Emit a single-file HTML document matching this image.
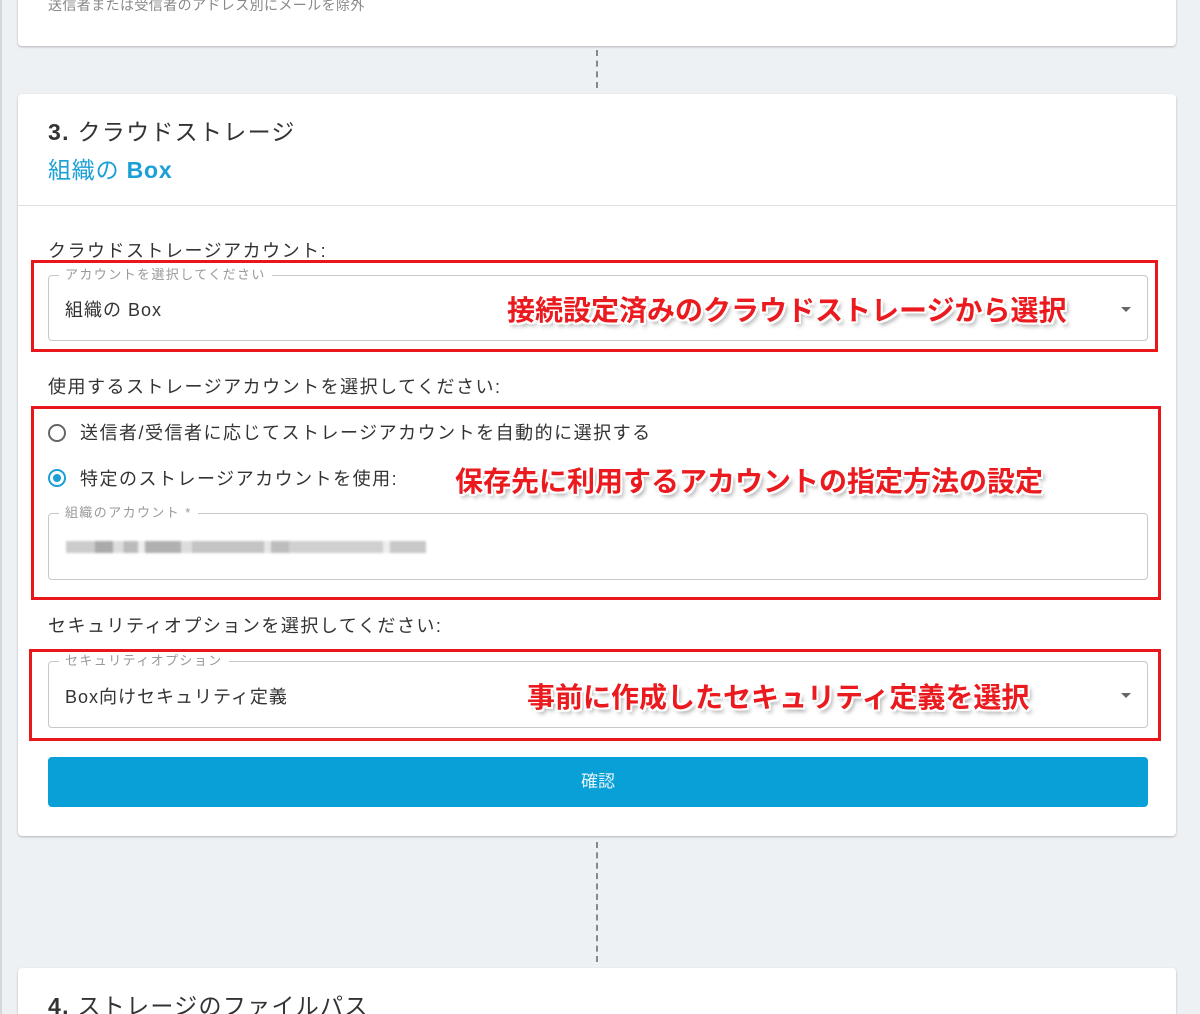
<!DOCTYPE html>
<html><head><meta charset="utf-8"><style>
*{margin:0;padding:0;box-sizing:border-box}
html,body{width:1200px;height:1014px;overflow:hidden}
body{background:#eef1f4;font-family:"Liberation Sans","Noto Sans CJK JP",sans-serif;position:relative;color:#333}
.a{position:absolute;white-space:nowrap}
.card{position:absolute;left:18px;width:1158px;background:#fff;border-radius:4px;box-shadow:0 1px 2px rgba(0,0,0,.25)}
.dash{position:absolute;left:596px;width:0;border-left:2px dashed #888}
.field{position:absolute;left:48px;width:1100px;border:1px solid #c8c8c8;border-radius:4px}
.leg{position:absolute;top:-9px;left:10px;background:#fff;padding:0 6px;font-size:13px;color:#999;line-height:16px;letter-spacing:1.4px;white-space:nowrap}
.val{position:absolute;left:16px;font-size:18px;color:#333;letter-spacing:1px;white-space:nowrap}
.caret{position:absolute;right:16px;width:0;height:0;border-left:5px solid transparent;border-right:5px solid transparent;border-top:5px solid #666}
.red{position:absolute;border:3px solid #e8171b}
.ann{position:absolute;font-size:28px;font-weight:bold;color:#ea1a1e;white-space:nowrap;text-shadow:2px 2px 0 #fff,-2px -2px 0 #fff,2px -2px 0 #fff,-2px 2px 0 #fff,0 2px 0 #fff,2px 0 0 #fff,0 -2px 0 #fff,-2px 0 0 #fff,3px 4px 4px rgba(0,0,0,.35)}
.lbl{position:absolute;left:48px;font-size:18px;color:#333;white-space:nowrap;letter-spacing:1.5px}
.radio{position:absolute;left:48px;width:18px;height:18px;border:2px solid #666;border-radius:50%}
</style></head><body>
<div style="position:absolute;left:0;top:0;width:2px;height:1014px;background:#d5d8db"></div>
<div class="card" style="top:-10px;height:56px"><div class="a" style="left:30px;top:5px;font-size:14px;color:#888;letter-spacing:0.4px">送信者または受信者のアドレス別にメールを除外</div></div>
<div class="dash" style="top:50px;height:38px"></div>
<div class="card" style="top:94px;height:742px">
 <div class="a" style="left:30px;top:19px;font-size:23px;color:#333;letter-spacing:1.3px"><b>3.</b> クラウドストレージ</div>
 <div class="a" style="left:30px;top:57px;font-size:23px;color:#1a9fd6;letter-spacing:0.8px">組織の <b>Box</b></div>
 <div style="position:absolute;left:0;top:111px;width:100%;height:1px;background:#e0e0e0"></div>
</div>
<div class="lbl" style="top:237px">クラウドストレージアカウント:</div>
<div class="field" style="top:275px;height:66px"><div class="leg">アカウントを選択してください</div><div class="val" style="top:20px">組織の Box</div><div class="caret" style="top:31px"></div></div>
<div class="red" style="left:31px;top:260px;width:1127px;height:92px"></div>
<div class="ann" style="left:507px;top:289px">接続設定済みのクラウドストレージから選択</div>
<div class="lbl" style="top:373px">使用するストレージアカウントを選択してください:</div>
<div class="radio" style="top:424px"></div>
<div class="lbl" style="left:80px;top:419px">送信者/受信者に応じてストレージアカウントを自動的に選択する</div>
<div class="radio" style="top:469px;border-color:#1a9fd6"><div style="position:absolute;left:3px;top:3px;width:8px;height:8px;border-radius:50%;background:#1a9fd6"></div></div>
<div class="lbl" style="left:80px;top:465px">特定のストレージアカウントを使用:</div>
<div class="ann" style="left:455px;top:460px">保存先に利用するアカウントの指定方法の設定</div>
<div class="field" style="top:513px;height:67px"><div class="leg">組織のアカウント *</div>
 <div style="position:absolute;left:17px;top:27px;width:360px;height:12px;background:linear-gradient(90deg,#ccc 0 8%,#aaa 8% 13%,#ddd 13% 16%,#bbb 16% 20%,#eee 20% 22%,#b0b0b0 22% 32%,#ddd 32% 35%,#c4c4c4 35% 55%,#e6e6e6 55% 57%,#bdbdbd 57% 62%,#d0d0d0 62% 88%,#eee 88% 90%,#c8c8c8 90%);filter:blur(1px)"></div></div>
<div class="red" style="left:31px;top:406px;width:1130px;height:194px"></div>
<div class="lbl" style="top:612px">セキュリティオプションを選択してください:</div>
<div class="field" style="top:661px;height:67px"><div class="leg">セキュリティオプション</div><div class="val" style="top:21px">Box向けセキュリティ定義</div><div class="caret" style="top:31px"></div></div>
<div class="red" style="left:29px;top:649px;width:1132px;height:92px"></div>
<div class="ann" style="left:527px;top:676px">事前に作成したセキュリティ定義を選択</div>
<div style="position:absolute;left:48px;top:757px;width:1100px;height:50px;background:#08a0d6;border-radius:4px;color:#e6f4fb;font-size:17px;text-align:center;line-height:50px">確認</div>
<div class="dash" style="top:842px;height:120px"></div>
<div class="card" style="top:968px;height:60px"><div class="a" style="left:30px;top:19px;font-size:23px;color:#333;letter-spacing:1.3px"><b>4.</b> ストレージのファイルパス</div></div>
</body></html>
